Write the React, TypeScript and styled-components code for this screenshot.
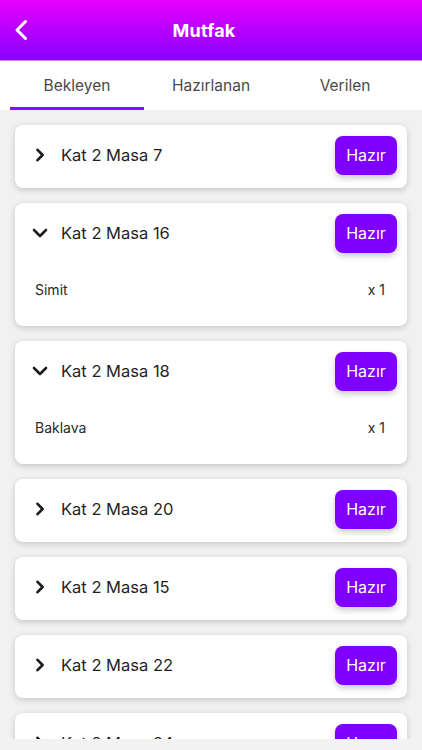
import React, { useState } from 'react'
import styled, { createGlobalStyle } from 'styled-components'

type Order = {
  id: number
  title: string
  items: { name: string; qty: number }[]
  open?: boolean
}

const orders: Order[] = [
  { id: 1, title: 'Kat 2 Masa 7', items: [{ name: 'Çay', qty: 2 }] },
  { id: 2, title: 'Kat 2 Masa 16', items: [{ name: 'Simit', qty: 1 }], open: true },
  { id: 3, title: 'Kat 2 Masa 18', items: [{ name: 'Baklava', qty: 1 }], open: true },
  { id: 4, title: 'Kat 2 Masa 20', items: [{ name: 'Kahve', qty: 1 }] },
  { id: 5, title: 'Kat 2 Masa 15', items: [{ name: 'Tost', qty: 1 }] },
  { id: 6, title: 'Kat 2 Masa 22', items: [{ name: 'Su', qty: 3 }] },
  { id: 7, title: 'Kat 2 Masa 24', items: [{ name: 'Ayran', qty: 1 }] },
]

const tabs = ['Bekleyen', 'Hazırlanan', 'Verilen']

export default function App() {
  const [tab, setTab] = useState(0)
  const [open, setOpen] = useState<number[]>(orders.filter((o) => o.open).map((o) => o.id))

  const toggle = (id: number) => {
    setOpen(open.includes(id) ? open.filter((x) => x !== id) : [...open, id])
  }

  return (
    <Screen>
      <GlobalStyle />
      <Header>
        <BackButton aria-label="Geri">
          <svg width="14" height="22" viewBox="0 0 14 22" fill="none">
            <path d="M11.5 2.5L3 11l8.5 8.5" stroke="#fff" strokeWidth="3" strokeLinecap="round" strokeLinejoin="round" />
          </svg>
        </BackButton>
        <Title>Mutfak</Title>
      </Header>
      <TabBar>
        {tabs.map((t, i) => (
          <Tab key={t} active={i === tab} onClick={() => setTab(i)}>
            {t}
          </Tab>
        ))}
      </TabBar>
      <List>
        {orders.map((o) => {
          const isOpen = open.includes(o.id)
          return (
            <Card key={o.id}>
              <CardHead onClick={() => toggle(o.id)}>
                <Chevron>
                  {isOpen ? (
                    <svg width="16" height="10" viewBox="0 0 16 10" fill="none">
                      <path d="M2 2l6 6 6-6" stroke="#1c1c1c" strokeWidth="2.6" strokeLinecap="round" strokeLinejoin="round" />
                    </svg>
                  ) : (
                    <svg width="10" height="14" viewBox="0 0 10 14" fill="none">
                      <path d="M2.5 1.8L7.6 7l-5.1 5.2" stroke="#1c1c1c" strokeWidth="2.6" strokeLinecap="round" strokeLinejoin="round" />
                    </svg>
                  )}
                </Chevron>
                <TableName>{o.title}</TableName>
                <ReadyButton onClick={(e) => e.stopPropagation()}>Hazır</ReadyButton>
              </CardHead>
              {isOpen && (
                <CardBody>
                  {o.items.map((it) => (
                    <ItemRow key={it.name}>
                      <span>{it.name}</span>
                      <span>x {it.qty}</span>
                    </ItemRow>
                  ))}
                </CardBody>
              )}
            </Card>
          )
        })}
      </List>
      <BottomBar />
    </Screen>
  )
}

const GlobalStyle = createGlobalStyle`
  body {
    margin: 0;
    background: #f1f1f1;
    font-family: Inter, "Noto Sans", "Liberation Sans", sans-serif;
  }
`

const Screen = styled.div`
  width: 422px;
  height: 750px;
  display: flex;
  flex-direction: column;
  overflow: hidden;
  background: #f1f1f1;
`

const Header = styled.header`
  height: 60px;
  flex-shrink: 0;
  display: flex;
  align-items: center;
  justify-content: center;
  padding-right: 14px;
  position: relative;
  background: linear-gradient(180deg, #e600fd 0%, #b200ff 55%, #8a00ff 100%);
  border-bottom: 1px solid #c58cff;
`

const BackButton = styled.button`
  position: absolute;
  left: 14px;
  top: 19px;
  padding: 0;
  border: none;
  background: none;
  display: flex;
  cursor: pointer;
`

const Title = styled.h1`
  margin: 0;
  color: #fff;
  font-size: 18px;
  font-weight: 700;
  letter-spacing: 0.2px;
`

const TabBar = styled.nav`
  height: 49px;
  flex-shrink: 0;
  display: grid;
  grid-template-columns: repeat(3, 1fr);
  padding: 0 10px;
  background: #fff;
`

const Tab = styled.div<{ active?: boolean }>`
  display: flex;
  align-items: center;
  justify-content: center;
  padding-top: 2px;
  font-size: 15.5px;
  color: #4a4a4a;
  border-bottom: 3px solid ${(p) => (p.active ? '#8a0cff' : 'transparent')};
  cursor: pointer;
`

const List = styled.main`
  flex: 1;
  overflow: hidden;
  display: flex;
  flex-direction: column;
  gap: 15px;
  padding: 15px 15px 0;
`

const BottomBar = styled.div`
  height: 11px;
  flex-shrink: 0;
  background: #f2f2f2;
`

const Card = styled.section`
  flex-shrink: 0;
  background: #fff;
  border-radius: 8px;
  box-shadow: 0 2px 6px rgba(0, 0, 0, 0.18);
`

const CardHead = styled.div`
  height: 63px;
  box-sizing: border-box;
  display: flex;
  align-items: center;
  padding: 0 10px 3px 17px;
  cursor: pointer;
`

const Chevron = styled.span`
  width: 16px;
  display: flex;
  justify-content: center;
  margin-right: 13px;
`

const TableName = styled.span`
  flex: 1;
  font-size: 16.5px;
  color: #1f1f1f;
`

const ReadyButton = styled.button`
  width: 62px;
  height: 39px;
  border: none;
  border-radius: 8px;
  background: #8000ff;
  color: #fff;
  font-family: inherit;
  font-size: 16px;
  box-shadow: 0 3px 6px rgba(0, 0, 0, 0.22);
  cursor: pointer;
`

const CardBody = styled.div`
  padding: 14px 22px 26px 20px;
`

const ItemRow = styled.div`
  display: flex;
  justify-content: space-between;
  font-size: 14px;
  line-height: 20px;
  color: #2a2a2a;
`
